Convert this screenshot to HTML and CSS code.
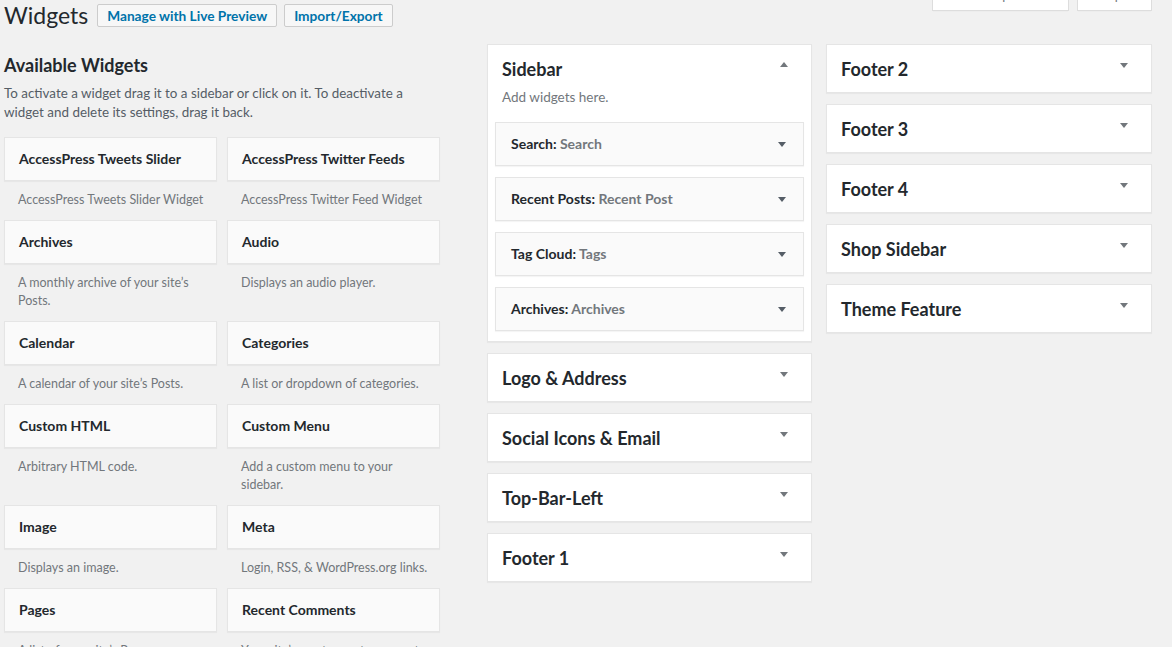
FILE: index.html
```html
<!DOCTYPE html>
<html lang="en">
<head>
<meta charset="utf-8">
<title>Widgets</title>
<link rel="stylesheet" href="styles.css">
</head>
<body>
<div class="wrap">
  <header class="page-head">
    <div class="head-left">
      <h1 class="page-title">Widgets</h1>
      <a class="btn" href="#">Manage with Live Preview</a>
      <a class="btn" href="#">Import/Export</a>
    </div>
    <div class="screen-meta">
      <div class="meta-tab meta-tab-options"><span>Screen Options</span></div>
      <div class="meta-tab meta-tab-help"><span>Help</span></div>
    </div>
  </header>
  <div class="columns">
    <section class="available">
      <h2 class="available-title">Available Widgets</h2>
      <p class="available-desc">To activate a widget drag it to a sidebar or click on it. To deactivate a widget and delete its settings, drag it back.</p>
      <div class="widget-grid">
        <div class="widget-item"><div class="widget-top"><h3>AccessPress Tweets Slider</h3></div><p class="widget-desc">AccessPress Tweets Slider Widget</p></div>
        <div class="widget-item"><div class="widget-top"><h3>AccessPress Twitter Feeds</h3></div><p class="widget-desc">AccessPress Twitter Feed Widget</p></div>
        <div class="widget-item"><div class="widget-top"><h3>Archives</h3></div><p class="widget-desc">A monthly archive of your site’s Posts.</p></div>
        <div class="widget-item"><div class="widget-top"><h3>Audio</h3></div><p class="widget-desc">Displays an audio player.</p></div>
        <div class="widget-item"><div class="widget-top"><h3>Calendar</h3></div><p class="widget-desc">A calendar of your site’s Posts.</p></div>
        <div class="widget-item"><div class="widget-top"><h3>Categories</h3></div><p class="widget-desc">A list or dropdown of categories.</p></div>
        <div class="widget-item"><div class="widget-top"><h3>Custom HTML</h3></div><p class="widget-desc">Arbitrary HTML code.</p></div>
        <div class="widget-item"><div class="widget-top"><h3>Custom Menu</h3></div><p class="widget-desc">Add a custom menu to your sidebar.</p></div>
        <div class="widget-item"><div class="widget-top"><h3>Image</h3></div><p class="widget-desc">Displays an image.</p></div>
        <div class="widget-item"><div class="widget-top"><h3>Meta</h3></div><p class="widget-desc">Login, RSS, &amp; WordPress.org links.</p></div>
        <div class="widget-item"><div class="widget-top"><h3>Pages</h3></div><p class="widget-desc">A list of your site’s Pages.</p></div>
        <div class="widget-item"><div class="widget-top"><h3>Recent Comments</h3></div><p class="widget-desc">Your site’s most recent comments.</p></div>
        <div class="widget-item"><div class="widget-top"><h3>Recent Posts</h3></div><p class="widget-desc">Your site’s most recent Posts.</p></div>
        <div class="widget-item"><div class="widget-top"><h3>RSS</h3></div><p class="widget-desc">Entries from any RSS or Atom feed.</p></div>
      </div>
    </section>

    <div class="sidebars sidebars-mid">
      <div class="sidebar open">
        <div class="sidebar-name"><h2>Sidebar</h2><span class="arrow arrow-up"></span></div>
        <p class="sidebar-desc">Add widgets here.</p>
        <div class="widget-holder">
          <div class="sb-widget"><h3>Search:<span class="in-title"> Search</span></h3><span class="arrow arrow-dark"></span></div>
          <div class="sb-widget"><h3>Recent Posts:<span class="in-title"> Recent Post</span></h3><span class="arrow arrow-dark"></span></div>
          <div class="sb-widget"><h3>Tag Cloud:<span class="in-title"> Tags</span></h3><span class="arrow arrow-dark"></span></div>
          <div class="sb-widget"><h3>Archives:<span class="in-title"> Archives</span></h3><span class="arrow arrow-dark"></span></div>
        </div>
      </div>
      <div class="sidebar"><div class="sidebar-name"><h2>Logo &amp; Address</h2><span class="arrow"></span></div></div>
      <div class="sidebar"><div class="sidebar-name"><h2>Social Icons &amp; Email</h2><span class="arrow"></span></div></div>
      <div class="sidebar"><div class="sidebar-name"><h2>Top-Bar-Left</h2><span class="arrow"></span></div></div>
      <div class="sidebar"><div class="sidebar-name"><h2>Footer 1</h2><span class="arrow"></span></div></div>
    </div>

    <div class="sidebars sidebars-right">
      <div class="sidebar"><div class="sidebar-name"><h2>Footer 2</h2><span class="arrow"></span></div></div>
      <div class="sidebar"><div class="sidebar-name"><h2>Footer 3</h2><span class="arrow"></span></div></div>
      <div class="sidebar"><div class="sidebar-name"><h2>Footer 4</h2><span class="arrow"></span></div></div>
      <div class="sidebar"><div class="sidebar-name"><h2>Shop Sidebar</h2><span class="arrow"></span></div></div>
      <div class="sidebar"><div class="sidebar-name"><h2>Theme Feature</h2><span class="arrow"></span></div></div>
    </div>
  </div>
</div>
</body>
</html>
```

FILE: styles.css
```css
* { box-sizing: border-box; }
html, body { margin: 0; background: #f1f1f1; }
body {
  font-family: Lato, "Noto Sans", "Liberation Sans", sans-serif;
  font-size: 13px;
  line-height: 1.4;
  color: #444;
}
.wrap { padding: 0 20px 0 4px; }

.page-head { display: flex; height: 31px; margin-bottom: 13px; }
.head-left { display: flex; align-items: center; }
.page-title {
  margin: 0 9px 0 0;
  font-size: 23px;
  font-weight: 400;
  line-height: 31px;
  color: #23282d;
}
.btn {
  display: inline-flex;
  align-items: center;
  height: 23px;
  padding: 0 9px;
  margin-right: 7px;
  border: 1px solid #ccc;
  border-radius: 2px;
  background: #f7f7f7;
  color: #0073aa;
  font-weight: 700;
  font-size: 13.7px;
  text-decoration: none;
}
.screen-meta { margin-left: auto; display: flex; gap: 8px; align-self: flex-start; }
.meta-tab {
  height: 11px;
  overflow: hidden;
  background: #fff;
  border: 1px solid #ddd;
  border-top: 0;
  box-shadow: 0 1px 1px -1px rgba(0,0,0,.1);
  color: #72777c;
}
.meta-tab span { display: block; margin-top: -12px; line-height: 15px; padding-left: 17px; }
.meta-tab-options { width: 137px; }
.meta-tab-help { width: 75px; }

.columns { display: flex; align-items: flex-start; }
.available { width: 436px; flex: none; margin-right: 47px; }
.available-title {
  margin: 10px 0 0;
  font-size: 18px;
  line-height: 22px;
  font-weight: 700;
  color: #23282d;
}
.available-desc { margin: 7.5px 0 15.5px; font-size: 13.4px; line-height: 19px; color: #555d66; }

.widget-grid { display: grid; grid-template-columns: 213px 213px; column-gap: 10px; }
.widget-top {
  height: 44px;
  display: flex;
  align-items: center;
  padding: 0 14px;
  background: #fafafa;
  border: 1px solid #e5e5e5;
  box-shadow: 0 1px 1px rgba(0,0,0,.04);
}
.widget-top h3 { margin: 0; font-size: 14px; font-weight: 700; color: #23282d; }
.widget-desc { margin: 0; padding: 10px 4px 11px 14px; font-size: 12.5px; line-height: 18px; color: #72777c; }

.sidebars-mid { width: 325px; flex: none; margin-right: 14px; }
.sidebars-right { width: 326px; flex: none; }
.sidebar {
  background: #fff;
  border: 1px solid #e5e5e5;
  box-shadow: 0 1px 1px rgba(0,0,0,.04);
  margin-bottom: 11px;
}
.sidebar-name {
  display: flex;
  justify-content: space-between;
  align-items: flex-start;
  padding: 16px 15px 14px 14px;
}
.sidebar-name h2 { margin: 0; font-size: 18px; line-height: 17px; font-weight: 700; color: #23282d; }
.sidebar.open .sidebar-name { padding-bottom: 0; }
.arrow {
  flex: none;
  width: 0;
  height: 0;
  border-left: 4px solid transparent;
  border-right: 4px solid transparent;
  border-top: 5px solid #72777c;
  margin: 2px 8px 0 0;
}
.arrow-up { border-top: 0; border-bottom: 5px solid #72777c; margin-top: 1px; }
.sidebar-desc { margin: 10px 14px 16px; font-size: 13.5px; line-height: 18px; color: #72777c; }
.widget-holder { padding: 0 7px 10px; }
.sb-widget {
  height: 44px;
  margin-bottom: 11px;
  display: flex;
  align-items: center;
  justify-content: space-between;
  padding: 0 17px 0 15px;
  background: #fafafa;
  border: 1px solid #e5e5e5;
  box-shadow: 0 1px 1px rgba(0,0,0,.04);
}
.sb-widget:last-child { margin-bottom: 0; }
.sb-widget h3 { margin: 0; font-size: 14px; font-weight: 700; color: #23282d; }
.in-title { color: #72777c; }
.arrow-dark { border-top-color: #555d66; margin: 1px 0 0 0; }
```
